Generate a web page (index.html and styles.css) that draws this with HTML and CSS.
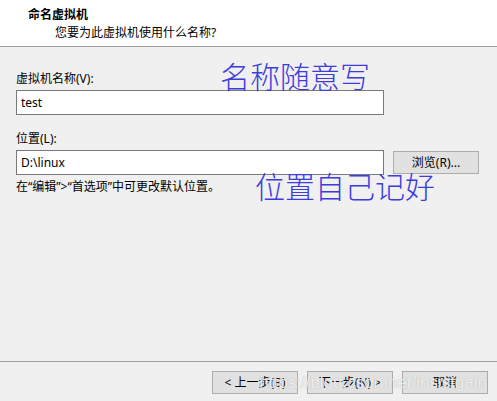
FILE: index.html
```html
<!DOCTYPE html>
<html lang="zh-CN">
<head>
<meta charset="utf-8">
<title>命名虚拟机</title>
<link rel="stylesheet" href="styles.css">
</head>
<body>
<div class="dialog">
  <div class="header">
    <div class="title">命名虚拟机</div>
    <div class="subtitle">您要为此虚拟机使用什么名称?</div>
  </div>
  <div class="content">
    <div class="label">虚拟机名称(V):</div>
    <div class="row">
      <div class="input">test</div>
    </div>
    <div class="label label2">位置(L):</div>
    <div class="row">
      <div class="input">D:\linux</div>
      <div class="btn browse">浏览(R)...</div>
    </div>
    <div class="hint">在“编辑”&gt;“首选项”中可更改默认位置。</div>
  </div>
  <div class="footer">
    <div class="btn">&lt; 上一步(B)</div>
    <div class="btn">下一步(N) &gt;</div>
    <div class="btn">取消</div>
  </div>
  <div class="note note1">名称随意写</div>
  <div class="note note2">位置自己记好</div>
  <div class="watermark">https://blog.csdn.net/insistgain</div>
</div>
</body>
</html>
```
FILE: styles.css
```css
html, body {
  margin: 0;
  padding: 0;
}
body {
  background: #f0f0f0;
  font-family: "Noto Sans", "Noto Sans CJK SC", sans-serif;
  font-size: 12px;
  color: #000;
}
.dialog {
  position: relative;
  width: 497px;
  height: 401px;
  display: flex;
  flex-direction: column;
  overflow: hidden;
}
.header {
  background: #fff;
  height: 47px;
  box-sizing: border-box;
  padding-top: 7px;
  border-bottom: 1px solid #a0a0a0;
}
.title {
  font-weight: bold;
  line-height: 16px;
  padding-left: 28px;
}
.subtitle {
  line-height: 16px;
  margin-top: 2px;
  padding-left: 55px;
}
.content {
  padding: 24px 16px 0 16px;
  display: flex;
  flex-direction: column;
}
.label {
  line-height: 16px;
  margin-bottom: 3px;
}
.label2 {
  margin-top: 16px;
}
.row {
  display: flex;
  align-items: flex-start;
  gap: 9px;
}
.input {
  width: 368px;
  height: 25px;
  box-sizing: border-box;
  border: 1px solid #7a7a7a;
  background: #fff;
  padding-left: 4px;
  line-height: 23px;
}
.btn {
  width: 86px;
  height: 23px;
  box-sizing: border-box;
  border: 1px solid #adadad;
  background: #e1e1e1;
  text-align: center;
  line-height: 21px;
}
.browse {
  margin-top: 1px;
}
.hint {
  line-height: 16px;
  margin-top: 4px;
}
.footer {
  margin-top: auto;
  border-top: 1px solid #a0a0a0;
  padding: 9px 9px 7px 0;
  display: flex;
  justify-content: flex-end;
  gap: 9px;
}
.note {
  position: absolute;
  font-family: "Noto Sans CJK SC", sans-serif;
  font-weight: 300;
  font-size: 30px;
  line-height: 30px;
  color: #3d3ddb;
  white-space: nowrap;
}
.note1 {
  left: 220px;
  top: 60px;
}
.note2 {
  left: 255px;
  top: 170px;
}
.watermark {
  position: absolute;
  right: 10px;
  top: 373px;
  font-family: "Liberation Sans", sans-serif;
  font-size: 17px;
  line-height: 20px;
  color: rgba(255, 255, 255, 0.8);
  text-shadow: 0 0 1px rgba(140, 140, 140, 0.7);
  white-space: nowrap;
}
```
